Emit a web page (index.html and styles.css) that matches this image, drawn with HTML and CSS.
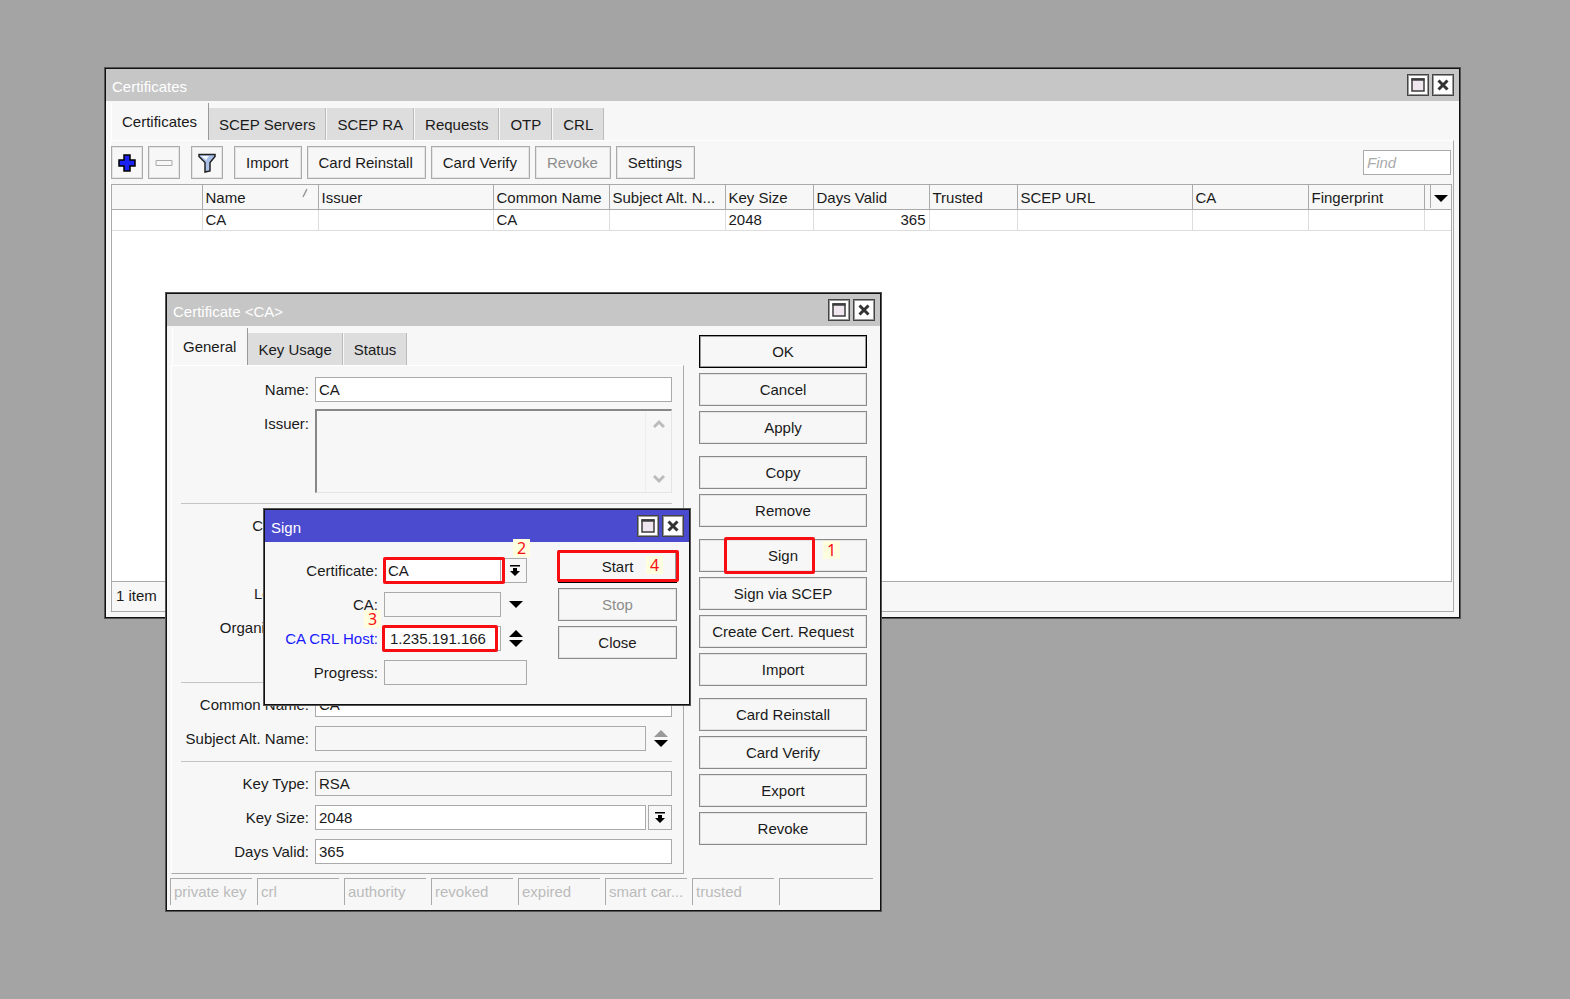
FILE: index.html
```html
<!DOCTYPE html>
<html lang="en">
<head>
    <meta charset="UTF-8">
    <meta name="viewport" content="width=device-width, initial-scale=1.0">
    <title>Certificates</title>
    <link rel="stylesheet" href="styles.css">
</head>
<body>

    <svg class="defs" width="0" height="0">
        <symbol id="max" viewBox="0 0 20 20">
            <path d="M4 4h12v12H4z" fill="#f0e6ef" stroke="#3c3c3c" stroke-width="1.500"/>
            <path d="M3.500 4.500h13" stroke="#3c3c3c" stroke-width="2.500"/>
        </symbol>
        <symbol id="close" viewBox="0 0 20 20">
            <path d="M5.500 5.500l9 9M14.500 5.500l-9 9" stroke="#333" stroke-width="3" fill="none"/>
        </symbol>
        <symbol id="down" viewBox="0 0 14 7"><path d="M0 0h14L7 7z"/></symbol>
        <symbol id="up" viewBox="0 0 14 7"><path d="M0 7h14L7 0z"/></symbol>
        <symbol id="drop" viewBox="0 0 12 12"><path d="M1 0h10v1.500H1zM4 3h4v3h3l-5 5-5-5h3z"/></symbol>
    </svg>

    <main class="desktop">

        <section class="window win-list">
            <header class="titlebar">
                <h1>Certificates</h1>
                <button type="button" class="win-btn" aria-label="Maximize"><svg><use href="#max"/></svg></button>
                <button type="button" class="win-btn" aria-label="Close"><svg><use href="#close"/></svg></button>
            </header>
            <nav class="tabs">
                <button type="button" class="tab active">Certificates</button>
                <button type="button" class="tab">SCEP Servers</button>
                <button type="button" class="tab">SCEP RA</button>
                <button type="button" class="tab">Requests</button>
                <button type="button" class="tab">OTP</button>
                <button type="button" class="tab">CRL</button>
            </nav>
            <div class="panel list-panel">
                <div class="toolbar">
                    <button type="button" class="btn icon-btn" aria-label="Add">
                        <svg width="18" height="18" viewBox="0 0 18 18"><path d="M6 1h6v5h5v6h-5v5H6v-5H1V6h5z" fill="#1c22f0" stroke="#000" stroke-width="1.500"/></svg>
                    </button>
                    <button type="button" class="btn icon-btn remove" aria-label="Remove" disabled>
                        <svg width="18" height="18" viewBox="0 0 18 18"><path d="M1 6.500h16v5H1z" fill="#f7f7f7" stroke="#aaa"/></svg>
                    </button>
                    <button type="button" class="btn icon-btn filter" aria-label="Filter">
                        <svg width="20" height="20" viewBox="0 0 20 20"><path d="M2 1.500h16v2l-5 6V18l-5 1V9.500l-6-6z" fill="#a9c0ea" stroke="#222" stroke-width="1.500"/><path d="M4 3h8l-3 4z" fill="#f4f8ff"/></svg>
                    </button>
                    <button type="button" class="btn">Import</button>
                    <button type="button" class="btn">Card Reinstall</button>
                    <button type="button" class="btn">Card Verify</button>
                    <button type="button" class="btn" disabled>Revoke</button>
                    <button type="button" class="btn">Settings</button>
                    <input type="text" class="find" placeholder="Find" aria-label="Find">
                </div>
                <div class="list">
                    <table>
                        <colgroup>
                            <col class="c-flag"><col class="c-mid"><col class="c-wide"><col class="c-mid"><col class="c-mid"><col class="c-small">
                            <col class="c-mid"><col class="c-small"><col class="c-wide"><col class="c-mid"><col class="c-mid"><col>
                        </colgroup>
                        <thead>
                            <tr>
                                <th></th>
                                <th><span class="sorted">Name <svg width="10" height="10" viewBox="0 0 10 10"><path d="M1 9l4-8" stroke="#999" stroke-width="1.500"/><path d="M6 1l3 8H2" stroke="#fff" fill="none"/></svg></span></th>
                                <th>Issuer</th>
                                <th>Common Name</th>
                                <th>Subject Alt. N...</th>
                                <th>Key Size</th>
                                <th>Days Valid</th>
                                <th>Trusted</th>
                                <th>SCEP URL</th>
                                <th>CA</th>
                                <th>Fingerprint</th>
                                <th class="more"><button type="button" aria-label="Columns"><svg width="14" height="7"><use href="#down"/></svg></button></th>
                            </tr>
                        </thead>
                        <tbody>
                            <tr>
                                <td></td>
                                <td>CA</td>
                                <td></td>
                                <td>CA</td>
                                <td></td>
                                <td>2048</td>
                                <td class="num">365</td>
                                <td></td>
                                <td></td>
                                <td></td>
                                <td></td>
                                <td></td>
                            </tr>
                        </tbody>
                    </table>
                </div>
                <footer class="count">1 item</footer>
            </div>
        </section>

        <section class="window win-cert">
            <header class="titlebar">
                <h2>Certificate &lt;CA&gt;</h2>
                <button type="button" class="win-btn" aria-label="Maximize"><svg><use href="#max"/></svg></button>
                <button type="button" class="win-btn" aria-label="Close"><svg><use href="#close"/></svg></button>
            </header>
            <div class="cert-body">
                <div class="cert-main">
                    <nav class="tabs">
                        <button type="button" class="tab active">General</button>
                        <button type="button" class="tab">Key Usage</button>
                        <button type="button" class="tab">Status</button>
                    </nav>
                    <form class="panel cert-form">
                        <div class="group">
                            <div class="row"><label for="name">Name:</label><input type="text" id="name" value="CA"></div>
                            <div class="row issuer">
                                <label for="issuer">Issuer:</label>
                                <div class="area">
                                    <textarea id="issuer" readonly></textarea>
                                    <div class="scroll">
                                        <svg width="12" height="10" viewBox="0 0 12 10"><path d="M1 8l5-5 5 5"/></svg>
                                        <svg width="12" height="10" viewBox="0 0 12 10"><path d="M1 2l5 5 5-5"/></svg>
                                    </div>
                                </div>
                            </div>
                        </div>
                        <div class="group subject">
                            <div class="row"><label for="country">Country:</label><input type="text" id="country"></div>
                            <div class="row"><label for="state">State:</label><input type="text" id="state"></div>
                            <div class="row"><label for="locality">Locality:</label><input type="text" id="locality"></div>
                            <div class="row"><label for="org">Organization:</label><input type="text" id="org"></div>
                            <div class="row"><label for="unit">Unit:</label><input type="text" id="unit"></div>
                        </div>
                        <div class="group">
                            <div class="row"><label for="common">Common Name:</label><input type="text" id="common" value="CA"></div>
                            <div class="row">
                                <label for="alt">Subject Alt. Name:</label><input type="text" id="alt" readonly>
                                <button type="button" class="spin" aria-label="Add or remove name"><svg class="dim" width="14" height="7"><use href="#up"/></svg><svg width="14" height="7"><use href="#down"/></svg></button>
                            </div>
                        </div>
                        <div class="group">
                            <div class="row"><label for="type">Key Type:</label><input type="text" id="type" value="RSA" readonly></div>
                            <div class="row">
                                <label for="size">Key Size:</label><input type="text" id="size" value="2048">
                                <button type="button" class="drop" aria-label="Choose key size"><svg width="12" height="12"><use href="#drop"/></svg></button>
                            </div>
                            <div class="row"><label for="days">Days Valid:</label><input type="text" id="days" value="365"></div>
                        </div>
                    </form>
                </div>
                <div class="actions">
                    <button type="button" class="btn default">OK</button>
                    <button type="button" class="btn">Cancel</button>
                    <button type="button" class="btn">Apply</button>
                    <button type="button" class="btn first">Copy</button>
                    <button type="button" class="btn">Remove</button>
                    <div class="marked first">
                        <button type="button" class="btn">Sign</button>
                        <span class="mark mark-sign"></span>
                        <span class="step step-1">1</span>
                    </div>
                    <button type="button" class="btn">Sign via SCEP</button>
                    <button type="button" class="btn">Create Cert. Request</button>
                    <button type="button" class="btn">Import</button>
                    <button type="button" class="btn first">Card Reinstall</button>
                    <button type="button" class="btn">Card Verify</button>
                    <button type="button" class="btn">Export</button>
                    <button type="button" class="btn">Revoke</button>
                </div>
            </div>
            <footer class="flags">
                <span>private key</span>
                <span>crl</span>
                <span>authority</span>
                <span>revoked</span>
                <span>expired</span>
                <span>smart car...</span>
                <span>trusted</span>
                <span></span>
            </footer>
        </section>

        <section class="window win-sign">
            <header class="titlebar">
                <h2>Sign</h2>
                <button type="button" class="win-btn" aria-label="Maximize"><svg><use href="#max"/></svg></button>
                <button type="button" class="win-btn" aria-label="Close"><svg><use href="#close"/></svg></button>
            </header>
            <form class="sign-body">
                <div class="sign-fields">
                    <div class="row">
                        <label for="s-cert">Certificate:</label>
                        <div class="marked"><input type="text" id="s-cert" value="CA"><span class="mark mark-cert"></span></div>
                        <button type="button" class="drop" aria-label="Choose certificate"><svg width="12" height="12"><use href="#drop"/></svg></button>
                        <span class="step step-2">2</span>
                    </div>
                    <div class="row">
                        <label for="s-ca">CA:</label>
                        <input type="text" id="s-ca" readonly>
                        <button type="button" class="spin" aria-label="Show CA"><svg width="14" height="7"><use href="#down"/></svg></button>
                    </div>
                    <div class="row">
                        <label for="s-host" class="changed">CA CRL Host:</label>
                        <div class="marked"><input type="text" id="s-host" value="1.235.191.166"><span class="mark mark-host"></span></div>
                        <button type="button" class="spin" aria-label="Add or remove host"><svg width="14" height="7"><use href="#up"/></svg><svg width="14" height="7"><use href="#down"/></svg></button>
                        <span class="step step-3">3</span>
                    </div>
                    <div class="row">
                        <label for="s-progress">Progress:</label>
                        <input type="text" id="s-progress" readonly>
                    </div>
                </div>
                <div class="sign-actions">
                    <div class="marked">
                        <button type="button" class="btn default">Start</button>
                        <span class="mark mark-start"></span>
                        <span class="step step-4">4</span>
                    </div>
                    <button type="button" class="btn" disabled>Stop</button>
                    <button type="button" class="btn">Close</button>
                </div>
            </form>
        </section>

    </main>

</body>
</html>
```
FILE: styles.css
```css
* {
    box-sizing: border-box;
}

body {
    margin: 0;
    background-color: #a4a4a4;
    color: #1a1a1a;
}

body, button, input, textarea {
    font-family: "Liberation Sans", Arial, sans-serif;
    font-size: 15px;
    line-height: 20px;
}

button {
    color: inherit;
    padding: 0;
}

.defs {
    display: block;
}

.desktop {
    position: relative;
    min-height: 100vh;
}

/* windows */
.window {
    position: absolute;
    display: flex;
    flex-direction: column;
    background-color: #f7f7f7;
    border: 1px solid #111;
    box-shadow: 0 0 0 1px #555;
}

.win-list {
    left: 105px;
    top: 68px;
    width: 1355px;
}

.win-cert {
    left: 166px;
    top: 293px;
    width: 715px;
}

.win-sign {
    left: 264px;
    top: 509px;
    width: 426px;
}

.titlebar {
    display: flex;
    align-items: center;
    gap: 3px;
    height: 32px;
    padding: 0 5px 0 6px;
    background-color: #c6c6c6;
    color: #fff;
}

.titlebar h1, .titlebar h2 {
    flex: 1;
    margin: 0;
    padding-top: 4px;
    font-size: 15px;
    font-weight: normal;
}

.win-sign .titlebar {
    background-color: #4b4bcf;
}

.win-btn {
    width: 22px;
    height: 22px;
    border: 1px solid #444;
    box-shadow: inset 0 0 0 1px #999;
    background-color: #fff;
}

.win-btn svg {
    display: block;
    width: 20px;
    height: 20px;
}

/* tabs and panels */
.tabs {
    display: flex;
    align-items: flex-end;
    gap: 1px;
    height: 39px;
    padding-left: 5px;
}

.tab {
    height: 32px;
    padding: 2px 10px 0;
    border: 0;
    border-right: 1px solid #bbb;
    background-color: #ddd;
}

.tab.active {
    height: 37px;
    padding: 1px 11px 0 10px;
    margin-right: -1px;
    border-left: 1px solid #fff;
    border-right-color: #999;
    background-color: #f7f7f7;
}

.panel {
    margin-left: 4px;
    border: 1px solid #fff;
    border-right-color: #aaa;
    border-bottom-color: #aaa;
}

/* buttons */
.btn {
    height: 33px;
    border: 1px solid #8a8a8a;
    box-shadow: inset 0 0 0 1px #e4e4e4;
    background-color: #f7f7f7;
}

.btn:disabled {
    color: #8c8c8c;
}

.btn.default {
    border-color: #000;
    box-shadow: inset 0 0 0 1px #999;
}

/* certificate list */
.list-panel {
    margin-right: 5px;
    margin-bottom: 5px;
}

.toolbar {
    display: flex;
    align-items: center;
    gap: 5px;
    padding: 5px 2px 5px 0;
}

.toolbar .btn {
    min-width: 67px;
    padding: 0 12px 0 11px;
    border-color: #aaa;
}

.toolbar .icon-btn {
    min-width: 0;
    width: 32px;
    padding: 0;
}

.icon-btn svg {
    display: block;
    margin: auto;
}

.toolbar .filter {
    margin: 0 6px;
}

.find {
    width: 88px;
    height: 25px;
    margin-left: auto;
}

.find::placeholder {
    color: #aaa;
    font-style: italic;
}

.list {
    height: 398px;
    margin-right: 1px;
    border: 1px solid #aaa;
    background-color: #fff;
}

table {
    width: 100%;
    table-layout: fixed;
    border-collapse: collapse;
}

.c-flag {
    width: 90px;
}

.c-mid {
    width: 116px;
}

.c-wide {
    width: 175px;
}

.c-small {
    width: 88px;
}

th, td {
    padding: 0 3px;
    border-right: 1px solid #ddd;
    border-bottom: 1px solid #ddd;
    font-weight: normal;
    text-align: left;
    white-space: nowrap;
}

th {
    height: 24px;
    padding-top: 2px;
    border-color: #aaa;
    background-color: #f7f7f7;
}

td {
    height: 21px;
}

th:last-child, td:last-child {
    border-right: 0;
}

.num {
    text-align: right;
}

.sorted {
    display: flex;
    justify-content: space-between;
    padding: 0 3px 0 0;
}

.more {
    padding: 0 0 0 5px;
}

.more button {
    display: block;
    width: 100%;
    height: 23px;
    border: 0;
    border-left: 1px solid #aaa;
    background: none;
}

.count {
    height: 29px;
    padding: 4px 0 0 4px;
    border-left: 1px solid #aaa;
}

/* form fields */
input, textarea {
    border: 1px solid #aaa;
    border-radius: 0;
    background-color: #fff;
    color: #1a1a1a;
    outline: 0;
}

input {
    min-width: 0;
    height: 25px;
    padding: 0 3px;
}

input:read-only {
    background-color: #f7f7f7;
}

.row {
    display: flex;
    align-items: center;
    position: relative;
    height: 25px;
}

.row label {
    text-align: right;
    white-space: nowrap;
}

.row > input {
    flex: 1;
}

.drop {
    display: flex;
    align-items: center;
    justify-content: center;
    width: 24px;
    height: 25px;
    margin-left: 2px;
    border: 1px solid #aaa;
    background-color: #f7f7f7;
}

.spin {
    display: flex;
    flex-direction: column;
    align-items: center;
    justify-content: center;
    gap: 3px;
    width: 22px;
    height: 25px;
    margin-left: 4px;
    border: 0;
    background: none;
}

.dim {
    fill: #999;
}

/* certificate window */
.cert-body {
    display: flex;
}

.cert-main {
    width: 517px;
}

.cert-form {
    height: 509px;
    padding: 0 11px 0 9px;
}

.cert-form .row label {
    width: 128px;
    margin-right: 6px;
}

.group {
    display: flex;
    flex-direction: column;
    gap: 9px;
    padding: 9px 0 10px;
    border-bottom: 1px solid #c4c4c4;
}

.group:first-child {
    gap: 7px;
    padding-top: 11px;
}

.group:last-child {
    border-bottom: 0;
}

.subject {
    height: 179px;
    padding-bottom: 0;
}

.issuer {
    height: 84px;
    align-items: stretch;
}

.issuer label {
    padding-top: 5px;
}

.area {
    display: flex;
    flex: 1;
    border: 1px solid #e4e4e4;
    border-top: 2px solid #888;
    border-left: 2px solid #888;
}

.area textarea {
    flex: 1;
    border: 0;
    background-color: #f7f7f7;
    resize: none;
}

.scroll {
    display: flex;
    flex-direction: column;
    justify-content: space-between;
    align-items: center;
    width: 26px;
    padding: 8px 0;
    border-left: 1px solid #eee;
}

.scroll path {
    fill: none;
    stroke: #bbb;
    stroke-width: 3;
}

.actions {
    display: flex;
    flex: 1;
    flex-direction: column;
    gap: 5px;
    padding: 9px 13px 0 15px;
}

.first {
    margin-top: 7px;
}

.flags {
    display: flex;
    gap: 5px;
    padding: 4px 7px 5px 3px;
}

.flags span {
    width: 82px;
    height: 27px;
    padding: 3px 0 0 3px;
    border-top: 1px solid #aaa;
    border-left: 1px solid #aaa;
    color: #bbb;
    white-space: nowrap;
}

.flags span:last-child {
    flex: 1;
}

/* sign window */
.sign-body {
    display: flex;
    justify-content: space-between;
    padding: 0 12px 19px 0;
}

.sign-fields {
    display: flex;
    flex-direction: column;
    gap: 9px;
    width: 262px;
    padding-top: 16px;
}

.sign-fields .row label {
    width: 113px;
    margin-right: 6px;
}

.sign-fields .changed {
    color: #1a1aff;
}

.sign-fields .marked {
    flex: 1;
}

.sign-fields .marked input {
    width: 100%;
}

#s-host {
    padding-left: 5px;
}

.sign-actions {
    display: flex;
    flex-direction: column;
    gap: 5px;
    width: 119px;
    padding-top: 8px;
}

/* numbered steps drawn over the controls */
.marked {
    display: flex;
    position: relative;
}

.marked .btn {
    flex: 1;
}

.mark {
    position: absolute;
    border: 3px solid #f80d12;
    border-radius: 2px;
    pointer-events: none;
}

.mark-sign {
    left: 25px;
    top: -2px;
    width: 91px;
    height: 37px;
}

.mark-cert {
    inset: -1px -4px -1px -1px;
}

.mark-host {
    inset: -1px 3px -1px -2px;
}

.mark-start {
    inset: 0 -2px 1px -1px;
}

.step {
    position: absolute;
    width: 17px;
    height: 18px;
    background-color: #ffffe0;
    color: #f80d12;
    font-family: "Noto Sans", sans-serif;
    font-size: 16px;
    line-height: 18px;
    text-align: center;
}

.step-1 {
    left: 124px;
    top: 2px;
}

.step-2 {
    right: -3px;
    top: -19px;
}

.step-3 {
    left: 99px;
    top: -16px;
}

.step-4 {
    right: 14px;
    top: 6px;
}
```
